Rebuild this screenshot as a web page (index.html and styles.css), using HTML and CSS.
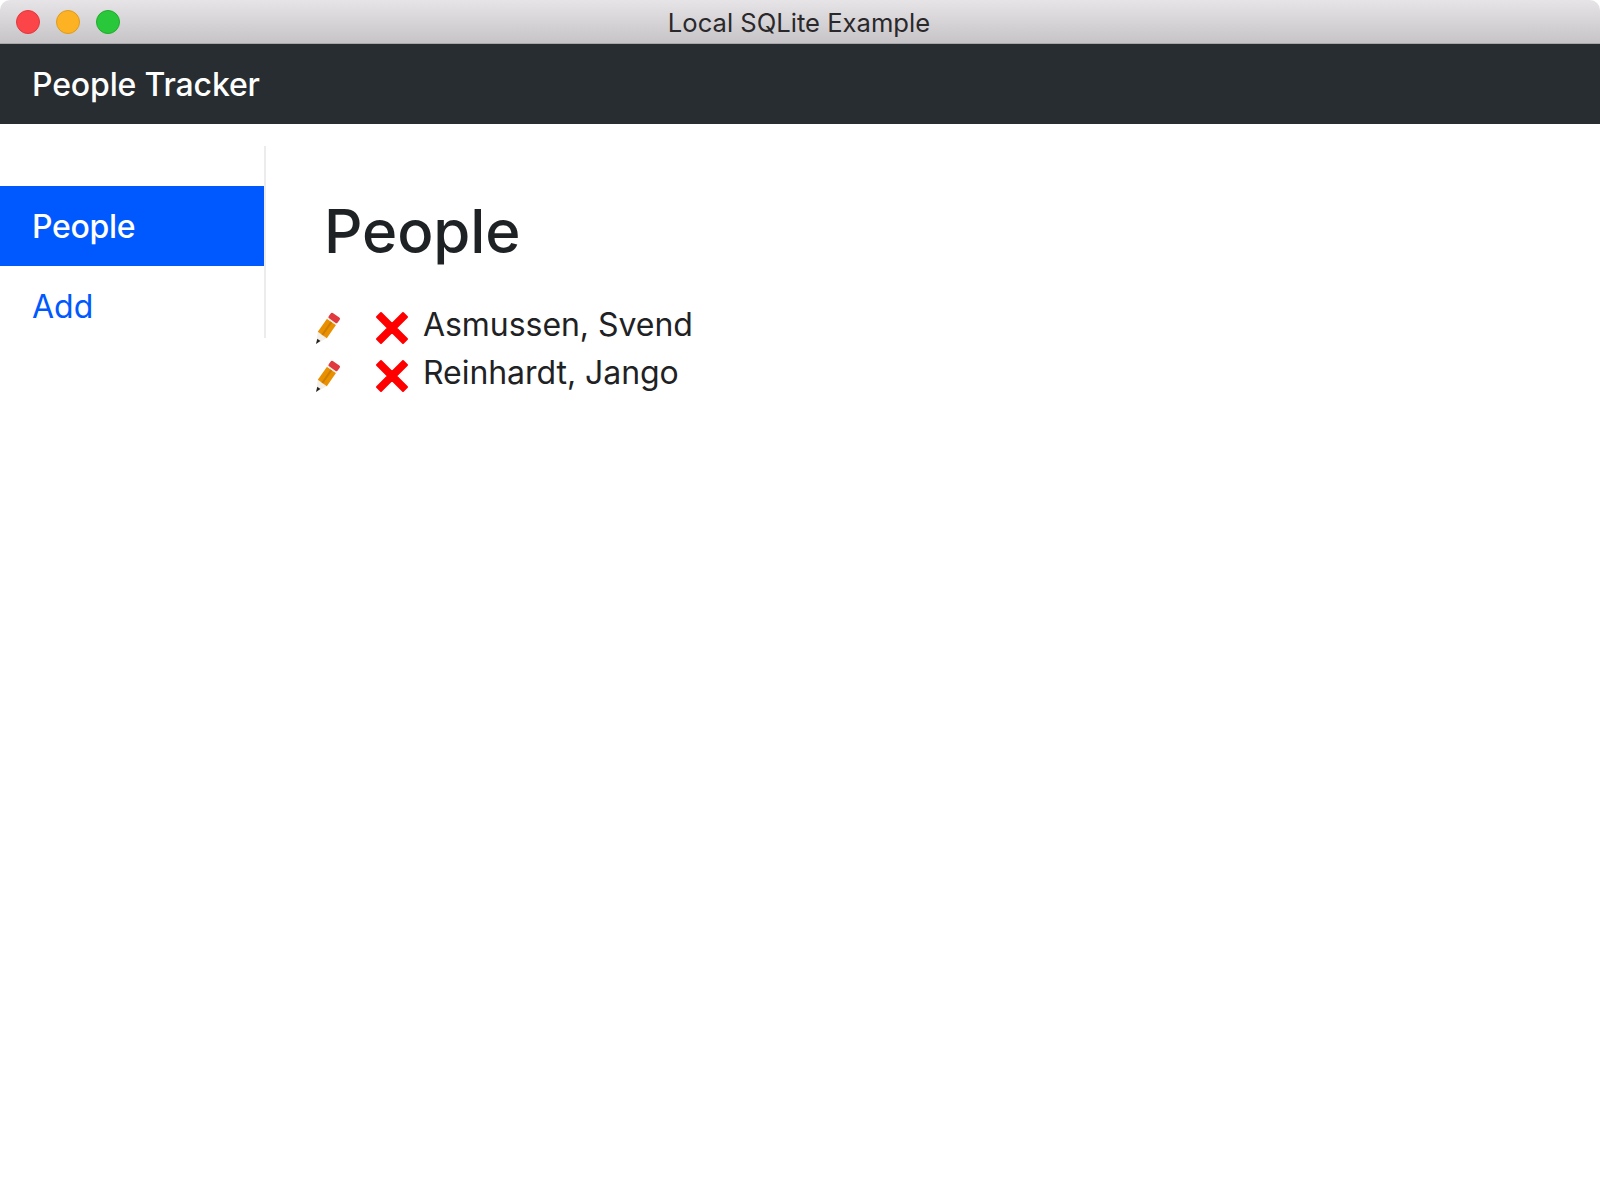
FILE: index.html
```html
<!DOCTYPE html>
<html lang="en">
<head>
    <meta charset="UTF-8">
    <meta name="viewport" content="width=device-width, initial-scale=1.0">
    <title>Local SQLite Example</title>
    <link rel="stylesheet" href="styles.css">
</head>
<body>
<div class="titlebar">
    <div class="traffic-lights">
        <span class="light light-close"></span>
        <span class="light light-min"></span>
        <span class="light light-max"></span>
    </div>
    <div class="titlebar-text">Local SQLite Example</div>
</div>
<nav class="navbar">People Tracker</nav>
<div class="layout">
    <aside class="sidebar">
        <a class="side-link active" href="#">People</a>
        <a class="side-link" href="#">Add</a>
    </aside>
    <main class="content">
        <h1 class="page-title">People</h1>
        <ul class="people-list">
            <li class="person">
                <svg class="icon-pencil" viewBox="0 0 26 34" width="26" height="34">
                    <g transform="translate(0 33) rotate(35)">
                        <path d="M0 0L-5.5-11H5.5z" fill="#f3efe8"/>
                        <path d="M0 0L-1.9-5H1.9z" fill="#222"/>
                        <rect x="-5.5" y="-27" width="11" height="16" fill="#e89000"/>
                        <rect x="-1" y="-27" width="2" height="16" fill="#cf7d00"/>
                        <rect x="-5.5" y="-29" width="11" height="2" fill="#f3efe8"/>
                        <rect x="-5.5" y="-35" width="11" height="6.5" rx="1.5" fill="#e03a3e"/>
                    </g>
                </svg>
                <svg class="icon-cross" viewBox="0 0 34 34" width="34" height="34">
                    <path d="M6 2L17 13 28 2 32 6 21 17 32 28 28 32 17 21 6 32 2 28 13 17 2 6z" fill="#ff0000" stroke="#ff0000" stroke-width="2" stroke-linejoin="round"/>
                </svg>
                <span class="person-name">Asmussen, Svend</span>
            </li>
            <li class="person">
                <svg class="icon-pencil" viewBox="0 0 26 34" width="26" height="34">
                    <g transform="translate(0 33) rotate(35)">
                        <path d="M0 0L-5.5-11H5.5z" fill="#f3efe8"/>
                        <path d="M0 0L-1.9-5H1.9z" fill="#222"/>
                        <rect x="-5.5" y="-27" width="11" height="16" fill="#e89000"/>
                        <rect x="-1" y="-27" width="2" height="16" fill="#cf7d00"/>
                        <rect x="-5.5" y="-29" width="11" height="2" fill="#f3efe8"/>
                        <rect x="-5.5" y="-35" width="11" height="6.5" rx="1.5" fill="#e03a3e"/>
                    </g>
                </svg>
                <svg class="icon-cross" viewBox="0 0 34 34" width="34" height="34">
                    <path d="M6 2L17 13 28 2 32 6 21 17 32 28 28 32 17 21 6 32 2 28 13 17 2 6z" fill="#ff0000" stroke="#ff0000" stroke-width="2" stroke-linejoin="round"/>
                </svg>
                <span class="person-name">Reinhardt, Jango</span>
            </li>
        </ul>
    </main>
</div>
</body>
</html>
```
FILE: styles.css
```css
body {
    margin: 0;
    background-color: #ffffff;
    color: #1f2225;
    font-family: Inter, "Liberation Sans", sans-serif;
}

.titlebar {
    position: relative;
    height: 43px;
    display: flex;
    align-items: center;
    justify-content: center;
    background: linear-gradient(#e6e4e7, #c6c4c6);
    border-bottom: 1px solid #a8a6a8;
    border-radius: 10px 10px 0 0;
}

.traffic-lights {
    position: absolute;
    left: 16px;
    top: 10px;
    display: flex;
    gap: 16px;
}

.light {
    width: 22px;
    height: 22px;
    border-radius: 50%;
    border: 1px solid transparent;
}

.light-close {
    background-color: #fc4548;
    border-color: #e2383c;
}

.light-min {
    background-color: #fdb224;
    border-color: #df9b1c;
}

.light-max {
    background-color: #28c83a;
    border-color: #1fac2d;
}

.titlebar-text {
    padding: 2px 2px 0 0;
    font-size: 25.6px;
    color: #2a282a;
}

.navbar {
    height: 80px;
    display: flex;
    align-items: center;
    padding-left: 32px;
    background-color: #272d31;
    color: #ffffff;
    font-size: 32px;
    font-weight: 500;
    letter-spacing: -0.15px;
}

.layout {
    display: flex;
    align-items: flex-start;
}

.sidebar {
    width: 264px;
    margin-top: 22px;
    padding: 40px 0 0;
    height: 152px;
    display: flex;
    flex-direction: column;
    border-right: 2px solid #ececec;
}

.side-link {
    height: 80px;
    flex: none;
    display: flex;
    align-items: center;
    padding-left: 32px;
    font-size: 32px;
    color: #0059ff;
    text-decoration: none;
}

.side-link.active {
    background-color: #0059ff;
    color: #ffffff;
    font-weight: 500;
    letter-spacing: -0.3px;
}

.content {
    flex: 1;
    padding: 69px 0 0 50px;
}

.page-title {
    margin: 0 0 31px 8px;
    font-size: 60px;
    font-weight: 500;
    letter-spacing: -0.1px;
    line-height: 76px;
    color: #1f2225;
}

.people-list {
    list-style: none;
    margin: 0;
    padding: 0;
}

.person {
    height: 48px;
    display: flex;
    align-items: center;
}

.icon-pencil {
    margin-top: 7px;
}

.icon-cross {
    margin: 7px 0 0 33px;
}

.person-name {
    margin-left: 14px;
    font-size: 32px;
    letter-spacing: -0.05px;
}
```
